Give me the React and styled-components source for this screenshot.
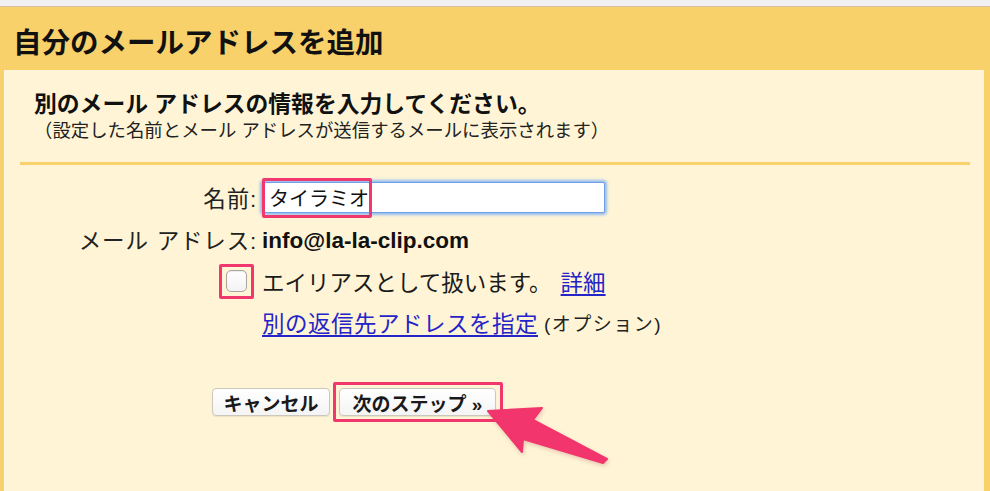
import React from "react";
import styled, { createGlobalStyle } from "styled-components";

const GlobalStyle = createGlobalStyle`
  html, body {
    margin: 0;
    padding: 0;
    background: #fff5d6;
  }
  body {
    font-family: "Liberation Sans", "Noto Sans CJK JP", sans-serif;
    color: #1a1a1a;
  }
`;

const pink = "#f0386f";

const Page = styled.div`
  position: relative;
  width: 990px;
  height: 491px;
  overflow: hidden;
  display: flex;
  flex-direction: column;
`;

const TopStrip = styled.div`
  height: 6px;
  background: #f1f1f3;
  border-bottom: 1px solid #d8c2a4;
  flex: none;
`;

const Frame = styled.div`
  flex: 1;
  display: flex;
  flex-direction: column;
  background: #f9d16a;
  padding: 0 6px 0 4px;
`;

const Title = styled.h1`
  margin: 0;
  height: 63px;
  display: flex;
  align-items: center;
  padding: 4px 0 0 9px;
  box-sizing: border-box;
  font-size: 28.5px;
  font-weight: 700;
  color: #111;
`;

const Body = styled.div`
  flex: 1;
  background: #fff5d6;
  border-left: 1px solid #fffaea;
`;

const Intro = styled.div`
  padding: 19px 0 0 29px;
`;

const Heading = styled.div`
  font-size: 22.8px;
  font-weight: 700;
  line-height: 30px;
  color: #111;
`;

const Note = styled.div`
  font-size: 18.4px;
  line-height: 24px;
  color: #222;
`;

const Rule = styled.hr`
  border: none;
  height: 3px;
  background: #f8d16c;
  margin: 19px 14px 0 15px;
`;

const Form = styled.div`
  display: grid;
  grid-template-columns: 252px 1fr;
  grid-template-rows: 42px 42px 42px 40px;
  column-gap: 5px;
  margin-top: 11px;
  font-size: 22.5px;
`;

const Label = styled.div`
  display: flex;
  align-items: center;
  justify-content: flex-end;
  word-spacing: 1px;
  letter-spacing: 0.8px;
  color: #222;
`;

const Value = styled.div`
  display: flex;
  align-items: center;
  gap: ${(p) => p.$gap || 0}px;
  padding-top: ${(p) => p.$shift || 0}px;
`;

const InputWrap = styled.div`
  position: relative;
`;

const NameInput = styled.input`
  width: 343px;
  height: 31px;
  box-sizing: border-box;
  border: 1px solid #6f9fe4;
  box-shadow: 0 0 3px 2px #92baf2;
  border-radius: 2px;
  background: #fff;
  padding: 0 6px;
  font-family: "Noto Sans CJK JP", sans-serif;
  font-size: 20px;
  color: #111;
  outline: none;
`;

const Highlight = styled.span`
  position: absolute;
  left: ${(p) => p.$left}px;
  top: ${(p) => p.$top}px;
  width: ${(p) => p.$w}px;
  height: ${(p) => p.$h}px;
  border: 3px solid ${pink};
  box-sizing: border-box;
  border-radius: 2px;
  pointer-events: none;
`;

const Email = styled.span`
  font-family: "Liberation Sans", sans-serif;
  font-weight: 700;
  font-size: 22.5px;
  color: #111;
`;

const BoxFrame = styled.div`
  width: 35px;
  height: 35px;
  box-sizing: border-box;
  border: 3px solid ${pink};
  border-radius: 2px;
  margin-right: 3px;
  display: flex;
  align-items: center;
  justify-content: center;
`;

const Check = styled.span`
  width: 21px;
  height: 22px;
  box-sizing: border-box;
  border: 1px solid #a9a59c;
  border-radius: 5px;
  background: linear-gradient(#ffffff, #f3f3f3);
  box-shadow: inset 0 1px 1px rgba(0, 0, 0, 0.08);
`;

const Link = styled.a`
  color: #2424c8;
  text-decoration: underline;
  text-underline-offset: 3px;
  letter-spacing: ${(p) => p.$spacing || 0}px;
  cursor: pointer;
`;

const Small = styled.span`
  font-size: 19px;
  letter-spacing: 1.5px;
  color: #222;
`;

const Buttons = styled.div`
  display: flex;
  align-items: center;
  gap: 3px;
  margin: 40px 0 0 207px;
`;

const Button = styled.button`
  height: 28px;
  width: ${(p) => p.$w}px;
  box-sizing: border-box;
  border: 1px solid #cbc7bd;
  border-radius: 4px;
  background: linear-gradient(#ffffff, #f4f4f4);
  box-shadow: 0 1px 1px rgba(0, 0, 0, 0.08);
  font-family: "Liberation Sans", "Noto Sans CJK JP", sans-serif;
  font-size: 19px;
  font-weight: 700;
  color: #1a1a1a;
  padding: 0;
  display: flex;
  align-items: center;
  justify-content: center;
`;

const FocusBox = styled.div`
  border: 3px solid ${pink};
  border-radius: 2px;
  padding: 3px 4px 3px 3px;
  display: flex;
`;

const Arrow = styled.svg`
  position: absolute;
  left: 480px;
  top: 395px;
  width: 135px;
  height: 75px;
  pointer-events: none;
  filter: drop-shadow(1px 2px 2px rgba(150, 60, 60, 0.25));
`;

export default function App() {
  return (
    <>
      <GlobalStyle />
      <Page>
        <TopStrip />
        <Frame>
          <Title>自分のメールアドレスを追加</Title>
          <Body>
            <Intro>
              <Heading>別のメール アドレスの情報を入力してください。</Heading>
              <Note>（設定した名前とメール アドレスが送信するメールに表示されます）</Note>
            </Intro>
            <Rule />
            <Form>
              <Label>名前:</Label>
              <Value>
                <InputWrap>
                  <NameInput defaultValue="タイラミオ" readOnly />
                  <Highlight $left={0} $top={-4} $w={110} $h={40} />
                </InputWrap>
              </Value>

              <Label>メール アドレス:</Label>
              <Value $shift={4}>
                <Email>info@la-la-clip.com</Email>
              </Value>

              <Label>
                <BoxFrame>
                  <Check />
                </BoxFrame>
              </Label>
              <Value $gap={9}>
                <span>エイリアスとして扱います。</span>
                <Link>詳細</Link>
              </Value>

              <Label />
              <Value $gap={6}>
                <Link $spacing={0.5}>別の返信先アドレスを指定</Link>
                <Small>(オプション)</Small>
              </Value>
            </Form>
            <Buttons>
              <Button $w={118}>キャンセル</Button>
              <FocusBox>
                <Button $w={157}>次のステップ »</Button>
              </FocusBox>
            </Buttons>
          </Body>
        </Frame>
        <Arrow viewBox="0 0 135 75">
          <polygon
            points="8,16 62,13 53,25 127,64 123,68 43,44 42,57"
            fill="#f2356c"
            stroke="#f2356c"
            strokeWidth="2"
            strokeLinejoin="round"
          />
        </Arrow>
      </Page>
    </>
  );
}
